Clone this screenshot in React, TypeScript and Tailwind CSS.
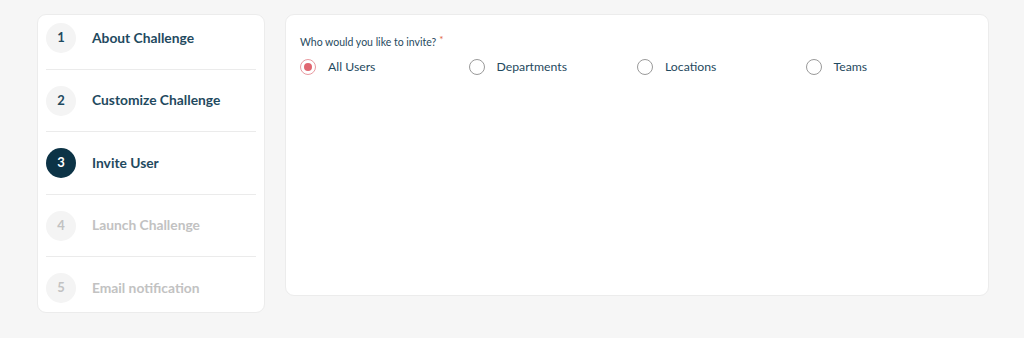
import React from "react";

const steps = [
  { n: 1, label: "About Challenge", state: "done" },
  { n: 2, label: "Customize Challenge", state: "done" },
  { n: 3, label: "Invite User", state: "active" },
  { n: 4, label: "Launch Challenge", state: "todo" },
  { n: 5, label: "Email notification", state: "todo" },
];

const options = ["All Users", "Departments", "Locations", "Teams"];

export default function App() {
  return (
    <div
      className="w-[1024px] h-[338px] bg-[#f6f6f6] flex items-start gap-[20px] pl-[37px] pt-[14px]"
      style={{ fontFamily: "Lato, 'Noto Sans', sans-serif" }}
    >
      <div className="w-[228px] h-[299px] bg-white border border-[#ececec] rounded-[9px] px-[8px] pt-[8px] flex flex-col">
        {steps.map((s, i) => (
          <React.Fragment key={s.n}>
            {i > 0 && <div className="h-px bg-[#ebebeb] my-[15.75px]" />}
            <div className="flex items-center h-[30px]">
              <div
                className={
                  s.state === "active"
                    ? "w-[30px] h-[30px] rounded-full bg-[#0c3346] text-white flex items-center justify-center text-[13px] font-bold"
                    : s.state === "done"
                    ? "w-[30px] h-[30px] rounded-full bg-[#f4f4f4] text-[#1f4a60] flex items-center justify-center text-[13px] font-bold"
                    : "w-[30px] h-[30px] rounded-full bg-[#f4f4f4] text-[#c2c2c2] flex items-center justify-center text-[13px] font-bold"
                }
              >
                {s.n}
              </div>
              <span
                className={
                  s.state === "todo"
                    ? "ml-[16px] text-[13.8px] font-bold text-[#c2c2c2]"
                    : "ml-[16px] text-[13.8px] font-bold text-[#1f4a60]"
                }
              >
                {s.label}
              </span>
            </div>
          </React.Fragment>
        ))}
      </div>

      <div className="w-[704px] h-[282px] bg-white border border-[#ececec] rounded-[9px] px-[14px] pt-[19px]">
        <div className="text-[10.5px] text-[#1f4a60] leading-[16px] flex">
          Who would you like to invite?
          <span className="text-[#e0623c] text-[10px] leading-[10px] ml-[3px]">*</span>
        </div>
        <div className="grid grid-cols-4 mt-[5px]">
          {options.map((o, i) => (
            <label key={o} className="flex items-center h-[24px]">
              {i === 0 ? (
                <span className="w-[16px] h-[16px] rounded-full border border-[#e89aa0] flex items-center justify-center">
                  <span className="w-[8px] h-[8px] rounded-full bg-[#e06670]" />
                </span>
              ) : (
                <span className="w-[16px] h-[16px] rounded-full border border-[#9a9a9a]" />
              )}
              <span className="ml-[12px] text-[12.25px] text-[#1f4a60]">{o}</span>
            </label>
          ))}
        </div>
      </div>
    </div>
  );
}
